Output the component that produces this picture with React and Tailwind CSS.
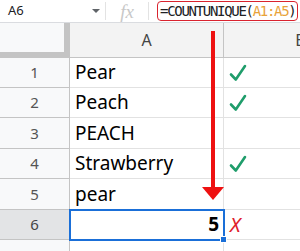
import React from "react";

const rows = [
  { n: 1, text: "Pear", check: true, h: "h-[30px]" },
  { n: 2, text: "Peach", check: true, h: "h-[30px]" },
  { n: 3, text: "PEACH", check: false, h: "h-[31px]" },
  { n: 4, text: "Strawberry", check: true, h: "h-[30px]" },
  { n: 5, text: "pear", check: false, h: "h-[31px]" },
];

function Check() {
  return (
    <svg width="18" height="18" viewBox="0 0 18 18" className="ml-[5px]">
      <path
        d="M2 10.5 L6.8 15.5 L16 2"
        fill="none"
        stroke="#1f9d6b"
        strokeWidth="2.6"
        strokeLinecap="round"
        strokeLinejoin="round"
      />
    </svg>
  );
}

export default function App() {
  return (
    <div
      className="relative w-[300px] h-[251px] overflow-hidden bg-white"
      style={{ fontFamily: '"Noto Sans", "Open Sans", sans-serif' }}
    >
      {/* formula bar */}
      <div className="flex items-center h-[23px] border-b border-[#dadce0] bg-white">
        <div className="w-[105px] flex items-center justify-between pl-2 pr-[5px] text-[13px] text-[#202124]">
          <span>A6</span>
          <span className="w-0 h-0 border-l-[4px] border-r-[4px] border-t-[4px] border-l-transparent border-r-transparent border-t-[#5f6368]" />
        </div>
        <div className="w-px h-[18px] bg-[#e3e3e3]" />
        <div
          className="w-[42px] text-center italic text-[19px] leading-none text-[#c8c8c8]"
          style={{ fontFamily: '"Liberation Serif", serif' }}
        >
          fx
        </div>
        <div className="w-px h-[18px] bg-[#e3e3e3]" />
        <div
          className="ml-2 w-[141px] h-[20px] flex items-center border-[1.5px] border-[#d9232e] rounded-[4px] pl-[2px] text-[14px] tracking-[-1.3px] text-[#202124]"
          style={{ fontFamily: '"DejaVu Sans Mono", monospace' }}
        >
          =COUNTUNIQUE(<span className="text-[#e8a33a]">A1:A5</span>)
        </div>
      </div>

      {/* column headers */}
      <div className="flex h-[35px]">
        <div className="w-[70px] shrink-0 bg-[#f8f9fa] border-r-[6px] border-b-[6px] border-[#c4c4c4]" />
        <div className="w-[154px] shrink-0 bg-[#f3f3f3] border-r border-b border-[#c4c4c4] flex items-center justify-center text-[16px] text-[#444]">
          A
        </div>
        <div className="w-[154px] shrink-0 bg-[#f3f3f3] border-r border-b border-[#c4c4c4] flex items-center justify-center text-[16px] text-[#444]">
          B
        </div>
      </div>

      {rows.map((r) => (
        <div key={r.n} className={`flex ${r.h}`}>
          <div className="w-[70px] shrink-0 bg-[#f8f9fa] border-r border-b border-[#c4c4c4] flex items-center justify-center text-[15px] text-[#555]">
            {r.n}
          </div>
          <div className="w-[154px] shrink-0 border-r border-b border-[#e2e2e2] flex items-center pl-[5px] text-[19px] text-black">
            {r.text}
          </div>
          <div className="w-[154px] shrink-0 border-r border-b border-[#e2e2e2] flex items-center">
            {r.check && <Check />}
          </div>
        </div>
      ))}

      {/* row 6 */}
      <div className="flex h-[30px]">
        <div className="w-[70px] shrink-0 bg-[#e3e4e6] border-r border-b border-[#c4c4c4] flex items-center justify-center text-[15px] text-[#444]">
          6
        </div>
        <div className="relative w-[154px] shrink-0 border-r border-b border-[#e2e2e2] outline-2 -outline-offset-1 outline-[#1a6fd8] flex items-center justify-end pr-[4px] text-[19px] font-bold text-black">
          5
          <span className="absolute -right-[4px] -bottom-[4px] w-[7px] h-[7px] bg-[#1a6fd8] border border-white" />
        </div>
        <div className="w-[154px] shrink-0 border-r border-b border-[#e2e2e2] flex items-center pl-[6px] text-[20px] italic text-[#e0202a]">
          X
        </div>
      </div>

      {/* row 7 */}
      <div className="flex h-[30px]">
        <div className="w-[70px] shrink-0 bg-[#f8f9fa] border-r border-[#c4c4c4] flex items-center justify-center text-[15px] text-[#555]">
          7
        </div>
        <div className="w-[154px] shrink-0 border-r border-[#e2e2e2]" />
      </div>

      {/* red arrow overlay */}
      <svg
        className="absolute left-[200px] top-[30px]"
        width="26"
        height="172"
        viewBox="0 0 26 172"
      >
        <rect x="11" y="1" width="4" height="158" fill="#ee1111" />
        <polygon points="2,157 24,157 13,170" fill="#ee1111" />
      </svg>
    </div>
  );
}
